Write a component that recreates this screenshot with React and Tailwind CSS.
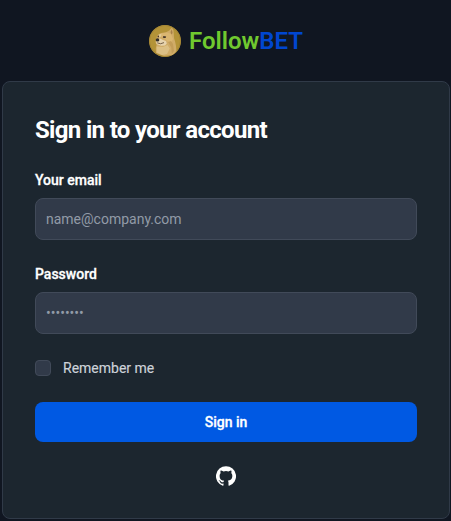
function DogeCoin() {
  return (
    <svg viewBox="0 0 32 32" className="mr-2 h-8 w-8" aria-hidden="true">
      <defs>
        <clipPath id="coin"><circle cx="16" cy="16" r="16" /></clipPath>
      </defs>
      <g clipPath="url(#coin)">
        <rect width="32" height="32" fill="#b39338" />
        <circle cx="16" cy="16" r="15.5" fill="none" stroke="#a58635" strokeWidth="1" />
        <path d="M8 11 L9.6 9.2 L12 8 L17 7.2 L20.3 5.4 L22.8 2.6 L24.4 5 L24.8 9 L25 13 L26.2 17 L27 21 L27.4 26 L24 30 L15 31 L7 28 L6.8 23 L7.6 20 L6.4 17 Z" fill="#d0ac68" />
        <path d="M12 8.5 L18 7.4 L22 9 L24 14 L22 18 L18 16 L14 11.5 L11.5 11.5 Z" fill="#dab670" />
        <path d="M21.5 7 L22.8 4.3 L23.6 8 L22.4 9.5 Z" fill="#a77f48" />
        <path d="M10 9.4 L12.4 8.8 L12 11.5 L9.4 13 Z" fill="#e3cb96" />
        <path d="M7 15 L11 13.6 L14 15 L17 16 L17.8 18.5 L16 20.5 L12 20.8 L7.6 19 Z" fill="#e7d4ae" />
        <path d="M7.8 21.5 L14 22 L18.5 20 L20.8 23.5 L18 29 L13 30 L7.8 27.5 Z" fill="#dcc085" />
        <path d="M19 17 L22 16 L24 19 L25 26 L22.8 29 L22.3 22.5 Z" fill="#c39d59" />
        <ellipse cx="8.5" cy="14.9" rx="1.8" ry="1.6" fill="#302d2a" />
        <ellipse cx="9.3" cy="11.5" rx="0.8" ry="0.9" fill="#4b3825" />
        <ellipse cx="15.5" cy="12" rx="1.7" ry="1.1" fill="#3e3023" />
        <circle cx="16" cy="11.6" r="0.4" fill="#d5c39f" />
        <path d="M8.2 17.8 Q11.5 19.8 15 17.6" fill="none" stroke="#65503a" strokeWidth="0.9" />
      </g>
    </svg>
  );
}

function GithubIcon() {
  return (
    <svg viewBox="0 0 24 24" className="h-5 w-5" fill="currentColor" aria-hidden="true">
      <path fillRule="evenodd" clipRule="evenodd" d="M12 .3a12 12 0 0 0-3.8 23.4c.6.1.8-.3.8-.6v-2c-3.3.7-4-1.6-4-1.6-.6-1.4-1.4-1.8-1.4-1.8-1-.7.1-.7.1-.7 1.2 0 1.9 1.2 1.9 1.2 1 1.8 2.8 1.3 3.5 1 0-.8.4-1.3.7-1.6-2.7-.3-5.5-1.3-5.5-6 0-1.2.5-2.3 1.3-3.1-.2-.4-.6-1.6 0-3.2 0 0 1-.3 3.4 1.2a11.5 11.5 0 0 1 6 0c2.3-1.5 3.3-1.2 3.3-1.2.6 1.6.2 2.8 0 3.2.9.8 1.3 1.9 1.3 3.2 0 4.6-2.8 5.6-5.5 5.9.5.4.9 1 .9 2.2v3.3c0 .3.1.7.8.6A12 12 0 0 0 12 .3" />
    </svg>
  );
}

function Field({ id, label, type, placeholder }) {
  return (
    <div>
      <label htmlFor={id} className="mb-2 block text-sm font-medium text-white [-webkit-text-stroke:0.3px_white]">{label}</label>
      <input
        id={id}
        type={type}
        placeholder={placeholder}
        className="block h-[42px] w-full rounded-lg border border-[#414a59] bg-[#313a49] p-2.5 text-sm text-white outline-none placeholder:text-[#929aa7]"
      />
    </div>
  );
}

export default function App() {
  return (
    <main className="flex h-[521px] flex-col items-center bg-[#101621] pt-[25px] font-['Roboto','Liberation_Sans',sans-serif] antialiased">
      <a href="#" className="mb-6 ml-px flex h-8 items-center text-2xl font-semibold">
        <DogeCoin />
        <span className="text-[#70c92f]">Follow</span>
        <span className="text-[#0046d0]">BET</span>
      </a>
      <section className="ml-px w-[448px] rounded-lg border border-[#303a48] bg-[#1c262f] p-8">
        <div className="flex flex-col gap-6">
          <h1 className="text-2xl font-bold tracking-[-0.67px] text-white">Sign in to your account</h1>
          <form className="flex flex-col gap-6" onSubmit={(e) => e.preventDefault()}>
            <Field id="email" label="Your email" type="email" placeholder="name@company.com" />
            <Field id="password" label="Password" type="password" placeholder="••••••••" />
            <div className="flex h-5 items-center">
              <input
                id="remember"
                type="checkbox"
                className="h-4 w-4 appearance-none rounded border border-[#414a59] bg-[#313a49]"
              />
              <label htmlFor="remember" className="ml-3 text-sm text-[#cdd2d9] [-webkit-text-stroke:0.15px_#cdd2d9]">Remember me</label>
            </div>
            <button type="submit" className="h-10 w-full rounded-lg bg-[#0059e3] text-sm font-medium text-white [-webkit-text-stroke:0.3px_white]">
              Sign in
            </button>
            <a href="#" aria-label="GitHub" className="flex justify-center text-white">
              <GithubIcon />
            </a>
          </form>
        </div>
      </section>
    </main>
  );
}
